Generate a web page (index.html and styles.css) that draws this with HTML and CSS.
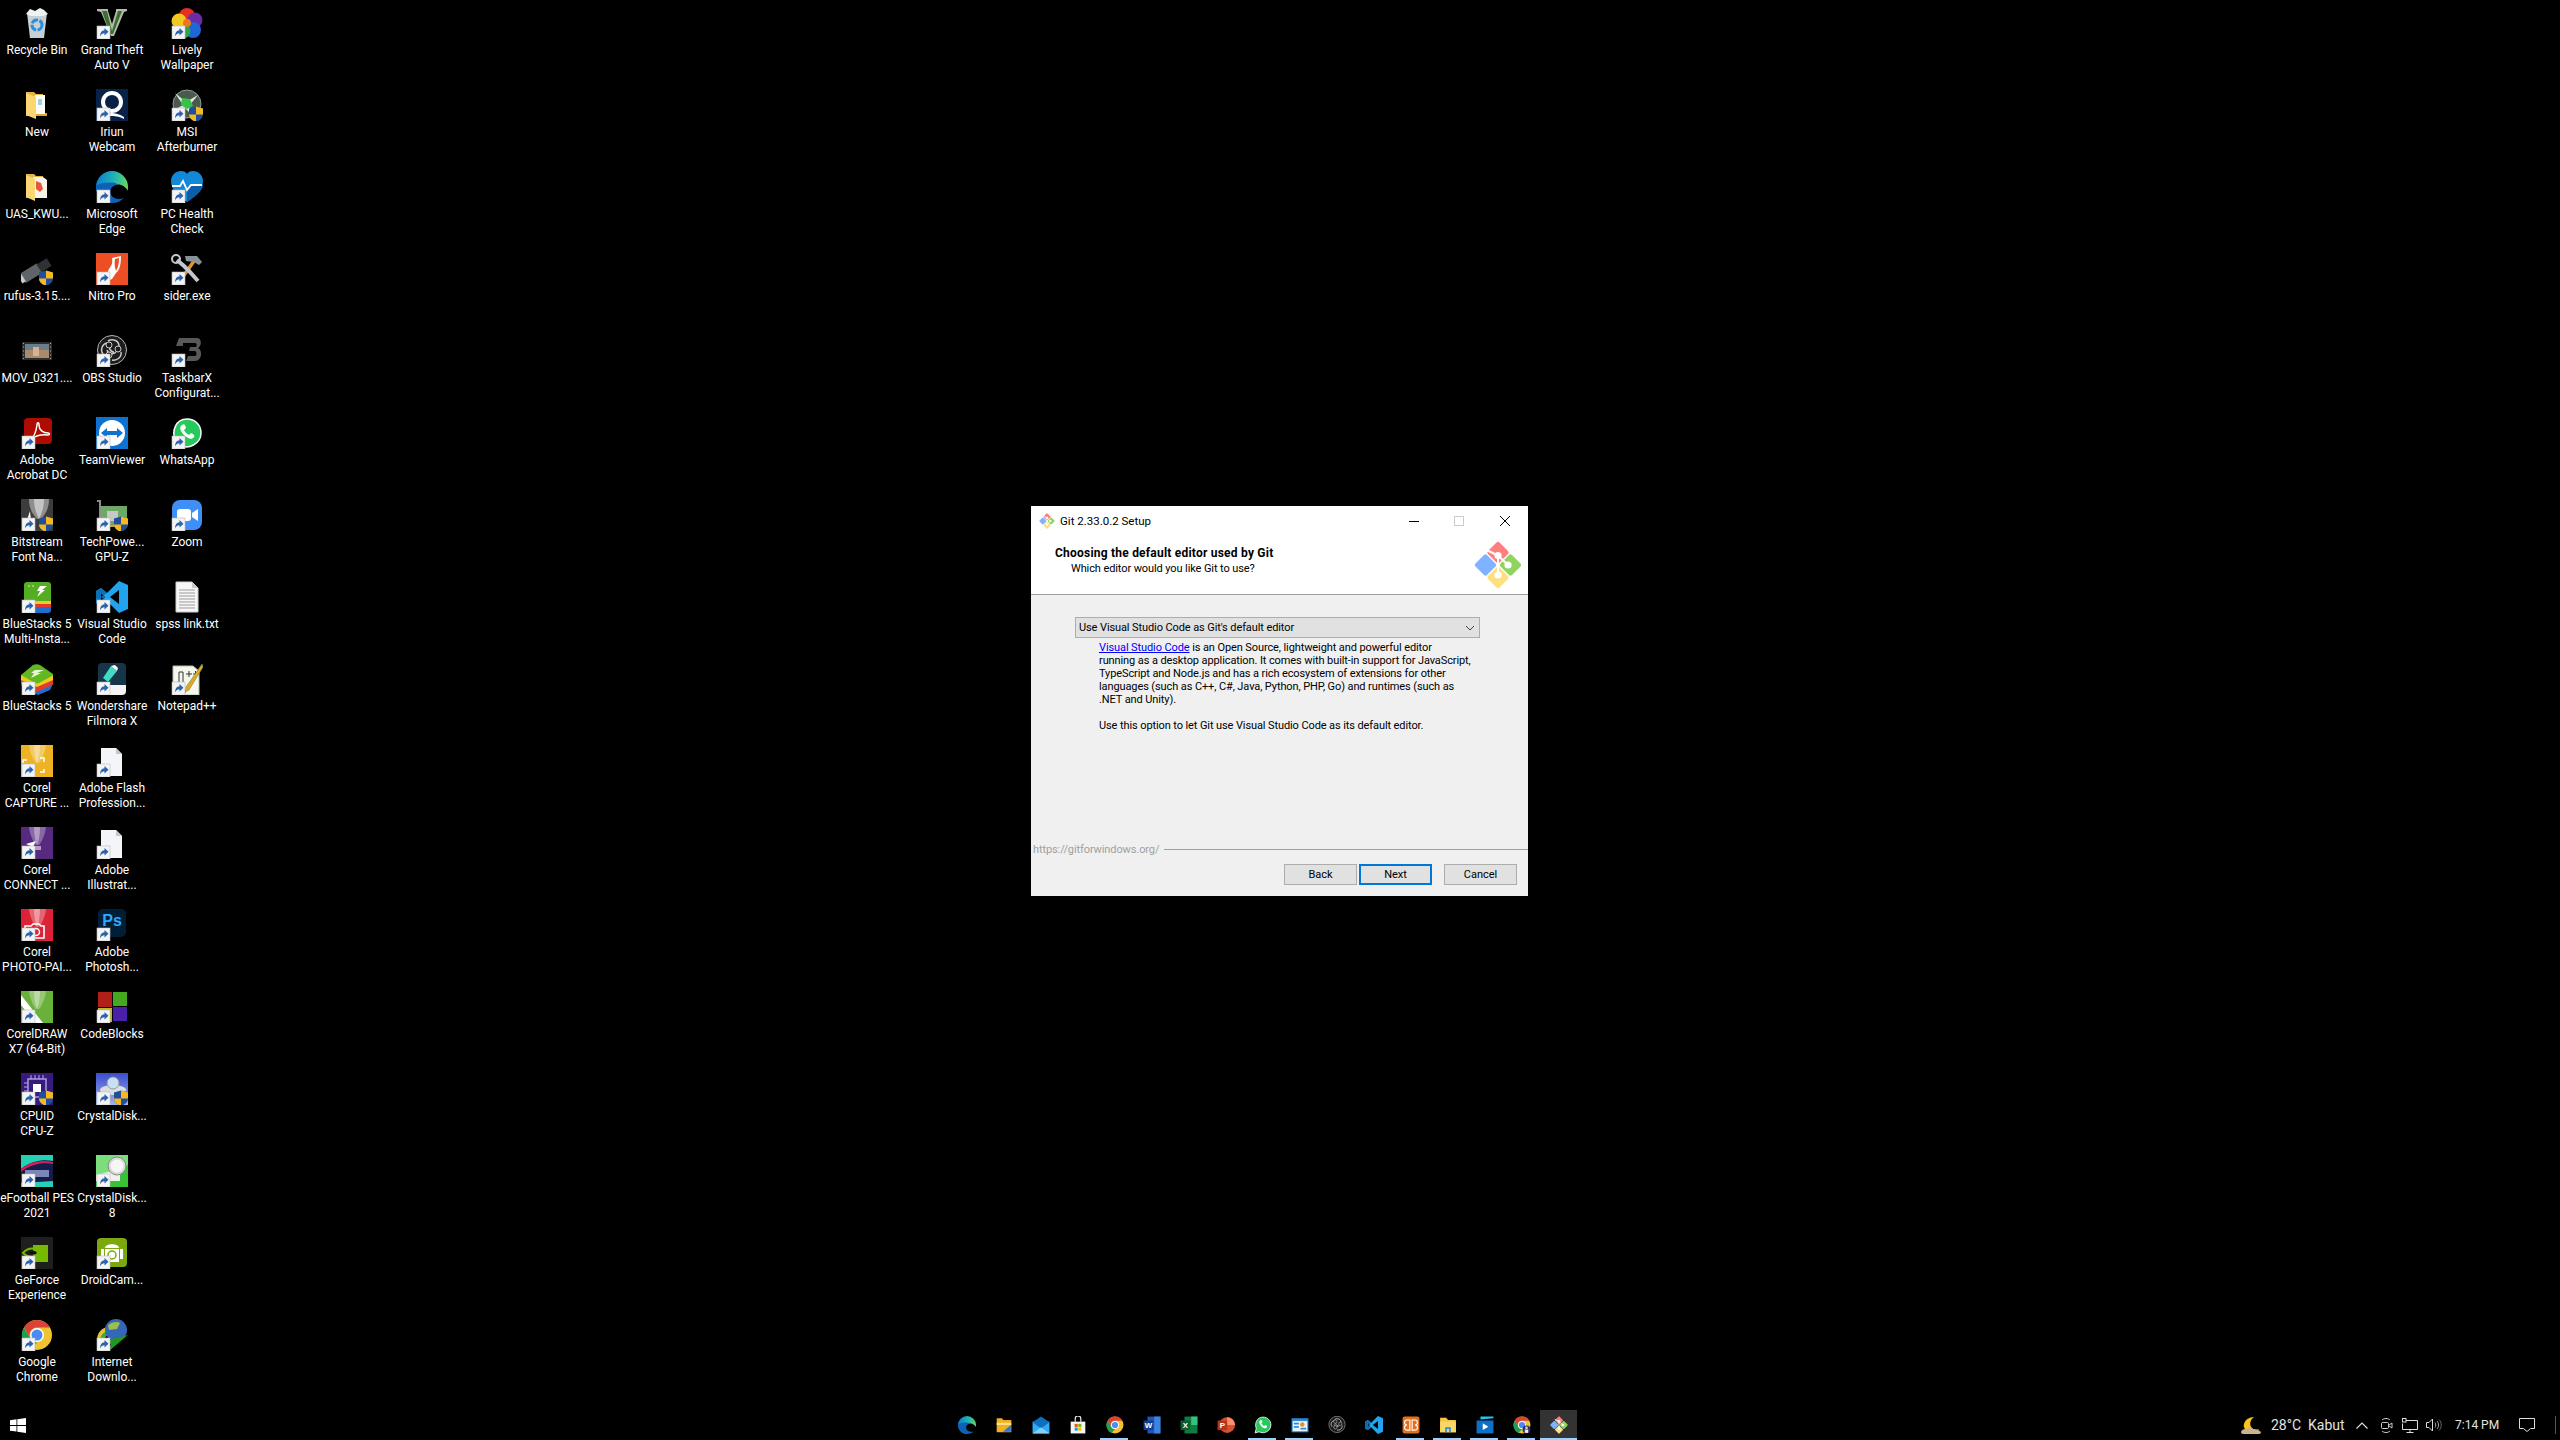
FILE: index.html
```html
<!DOCTYPE html>
<html lang="en">
<head>
<meta charset="utf-8">
<title>Git 2.33.0.2 Setup</title>
<link rel="stylesheet" href="styles.css">
</head>
<body>
<svg class="defs" width="0" height="0" aria-hidden="true">
<defs>
<linearGradient id="eg" x1="0" y1=".4" x2="1" y2=".6"><stop offset="0" stop-color="#0d7fd2"/><stop offset=".55" stop-color="#23b8b0"/><stop offset="1" stop-color="#72d65a"/></linearGradient>
<linearGradient id="cdi" x1="0" y1="0" x2="0" y2="1"><stop offset="0" stop-color="#3a4ccf"/><stop offset="1" stop-color="#9fb4e8"/></linearGradient>
<symbol id="sc" viewBox="0 0 32 32"><rect x="1" y="19" width="13" height="13" fill="#f4f4f4" stroke="#bbb" stroke-width=".6"/><path d="M4 29.5c0-4 1.5-6 4.5-6.3V21l4 3.8-4 3.8v-2.300c-2 0-3.300.8-4.500 3.200z" fill="#2a62ae"/></symbol>
<symbol id="sh" viewBox="0 0 32 32"><path d="M25 17.500l7 2v6c0 3.800-3 5.800-7 7.500-4-1.700-7-3.700-7-7.500v-6z" fill="#1f4f9c"/><path d="M25 17.500l7 2v6h-7zM25 25.500V33c-4-1.700-7-3.700-7-7.500z" fill="#f6b81f"/></symbol>
<symbol id="recycle" viewBox="0 0 32 32"><path d="M6 6l20 0-3 25H9z" fill="#c6d0d4"/><path d="M5 7l4-5 5 2 5-3 4 2 4 4-5 2H10z" fill="#eef2f3"/><circle cx="16" cy="18" r="5" fill="none" stroke="#2a8fd8" stroke-width="3" stroke-dasharray="7 1.500"/></symbol>
<symbol id="gta" viewBox="0 0 32 32"><path d="M1 2h11v2l4 13 4-13V2h11v2l-3 1-10 24h-3L5 5 1 4z" fill="#b4b8ad"/><path d="M6 4h5l5 20 6-20h4l-9 23h-3z" fill="#3b6f2d"/></symbol>
<symbol id="folder" viewBox="0 0 32 32"><path d="M5 3h8l2 2h7v22H5z" fill="#e6b445"/><rect x="14" y="6" width="10" height="21" fill="#fdfdf6"/><rect x="17" y="10" width="4" height="6" fill="#9fd0ea"/><path d="M5 4l10 4v22L5 26z" fill="#fbd671"/><path d="M15 27h11v-3h-2v1h-9z" fill="#e0a92e"/></symbol>
<symbol id="uas" viewBox="0 0 32 32"><path d="M5 3h8l2 2h7v22H5z" fill="#e6b445"/><path d="M12 6h10l4 3v18H12z" fill="#f7f3ea"/><path d="M15 10l5 2 2 6-3 3-4-3z" fill="#e1583b"/><path d="M5 4l9 4v22L5 26z" fill="#fbd671"/></symbol>
<symbol id="iriun" viewBox="0 0 32 32"><rect width="32" height="32" fill="#0a2147"/><circle cx="16" cy="13" r="9" fill="none" stroke="#fff" stroke-width="4"/><path d="M14 24c6 0 9 1 14 4v2c-6-3-9-3-14-3z" fill="#fff"/></symbol>
<symbol id="msi" viewBox="0 0 32 32"><circle cx="16" cy="15" r="14" fill="#4c5a4e" stroke="#8f9a92"/><path d="M4 4l11 9 12-7-9 11 5 11-9-9-11 2 9-5z" fill="#dfe8e2"/><path d="M11 9l8 1 3 7-6 3-6-4z" fill="#39c048"/></symbol>
<symbol id="edge" viewBox="0 0 32 32"><circle cx="16" cy="16" r="16" fill="url(#eg)"/><path d="M32.500 21C30 16 26 13 20.500 13.500 15 14 11.500 17 11.500 21c0 4 3 8 7 11.500H33z" fill="#000"/><path d="M0 15c0 10 7 17 16 17 5 0 9-2 12-5-5 2-10 1-12.500-2.500-2-3-1.500-7 1.500-9 2-1.500 4-2 5-2-2-1.500-4-2-6-2C9 11.500 3 12 0 15z" fill="#0b62b6"/></symbol>
<symbol id="health" viewBox="0 0 32 32"><path d="M16 31C7 25 0 19 0 10 0 4 5 0 10 0c3 0 5 1 6 3 1-2 3-3 6-3 5 0 10 4 10 10 0 9-7 15-16 21z" fill="#1488d8"/><path d="M16 31c9-6 16-12 16-17H20l-4 5z" fill="#0d5ea8"/><path d="M1 15h8l3-5 4 9 4-5h11" fill="none" stroke="#fff" stroke-width="1.800"/></symbol>
<symbol id="rufus" viewBox="0 0 32 32"><g transform="rotate(-32 16 16)"><rect x="-1" y="11" width="20" height="11" rx="1" fill="#5f6468"/><rect x="18" y="12" width="12" height="9" fill="#2f3235"/><rect x="-4" y="12.500" width="4" height="8" fill="#c8ccd0"/></g></symbol>
<symbol id="nitro" viewBox="0 0 32 32"><rect width="32" height="32" fill="#ee4e24"/><path d="M16 5l9-2c0 7-1 14-5 17l-4 6c-2 1-5 2-7 0 3-3 2-7 4-10 2-3 4-5 3-11z" fill="#fff"/><path d="M19 6l4-1c0 5-1 10-3 13-1-3-2-8-1-12z" fill="#ee4e24"/></symbol>
<symbol id="sider" viewBox="0 0 32 32"><path d="M9 28L23 8" stroke="#e0952a" stroke-width="3.500"/><path d="M14 3h12l5 6-3 3-5-3-8-1z" fill="#8a9298"/><path d="M6 7l7 6 5 5 9 10" stroke="#c2c8cc" stroke-width="4" fill="none"/><circle cx="5" cy="6" r="4" fill="none" stroke="#c2c8cc" stroke-width="2"/></symbol>
<symbol id="mov" viewBox="0 0 32 32"><rect x="1" y="7" width="30" height="18" fill="#2d2d2d"/><rect x="4" y="9" width="24" height="14" fill="#a88a6e"/><rect x="4" y="9" width="24" height="6" fill="#6b7d88"/><rect x="12" y="12" width="6" height="9" fill="#d9b090"/><path d="M2 8.500h1M2 12h1M2 16h1M2 20h1M2 23.500h1M29 8.500h1M29 12h1M29 16h1M29 20h1M29 23.500h1" stroke="#aaa"/></symbol>
<symbol id="obs" viewBox="0 0 32 32"><circle cx="16" cy="15" r="14.500" fill="#1c1c1c" stroke="#b5b5b5"/><path d="M12 6c5-3 11 0 11 5M25 17c1 5-4 9-9 8M7 19c-3-4-1-10 4-11M15 9c-3 3-1 8 3 8M20 17c-3 3-8 2-9-2" fill="none" stroke="#c9c9c9" stroke-width="1.500"/><circle cx="13" cy="10" r="3" fill="#1c1c1c" stroke="#c9c9c9"/><circle cx="22" cy="14" r="3" fill="#1c1c1c" stroke="#c9c9c9"/><circle cx="13" cy="20" r="3" fill="#1c1c1c" stroke="#c9c9c9"/></symbol>
<symbol id="tbx" viewBox="0 0 32 32"><path d="M8 3h18c5 0 5 8 1 10 5 2 4 13-3 13H15l2-5h7c2 0 2-4 0-5h-6l1-4h6c1-1 1-4-1-4H12v3H5z" fill="#595959"/></symbol>
<symbol id="acrobat" viewBox="0 0 32 32"><rect x="3" y="1" width="28" height="26" rx="4" fill="#ae0c00"/><path d="M10 22c3-2 5-7 6-14 0-3 2-3 2 0 0 5 4 8 9 8 2 0 2 2 0 2-6-1-11 0-17 4z" fill="none" stroke="#fff" stroke-width="1.500"/></symbol>
<symbol id="tv" viewBox="0 0 32 32"><rect width="32" height="32" fill="#0e72d2"/><circle cx="16" cy="16" r="13" fill="#fff"/><path d="M5 16l6-5v3h10v-3l6 5-6 5v-3H11v3z" fill="#0e72d2"/></symbol>
<symbol id="wa" viewBox="0 0 32 32"><path d="M2 30l2-8C1 15 4 2 16 2c8 0 14 6 14 14 0 11-13 17-21 12z" fill="#25c95c" stroke="#fff" stroke-width="1.500"/><path d="M11 8c-3 2-2 6 2 10 4 4 8 5 10 2 1-1 0-2-1-3l-2-1-2 2c-2-1-4-3-5-5l2-2-1-3c-1-1-2-1-3 0z" fill="#fff"/></symbol>
<symbol id="bits" viewBox="0 0 32 32"><rect width="32" height="32" fill="#3c3c3c"/><path d="M8 0c0 10 4 16 8 20h4c4-4 8-10 8-20z" fill="#8e8e8e"/><path d="M13 0c0 8 2 14 5 20 3-6 5-12 5-20z" fill="#c4c4c4"/><path d="M9 12l-6 18h8z" fill="#fff"/></symbol>
<symbol id="gpuz" viewBox="0 0 32 32"><rect x="4" y="7" width="27" height="19" fill="#6ea867"/><path d="M1 1h4v26H3V3H1z" fill="#8b8b8b"/><rect x="11" y="12" width="11" height="10" fill="#c8c8c8"/><rect x="8" y="26" width="20" height="2" fill="#c9a33a"/></symbol>
<symbol id="zoom" viewBox="0 0 32 32"><rect x="1" y="1" width="30" height="30" rx="8" fill="#3f8ff7"/><rect x="6" y="10" width="14" height="12" rx="3" fill="#fff"/><path d="M21 14l6-4v12l-6-4z" fill="#fff"/></symbol>
<symbol id="bs5m" viewBox="0 0 32 32"><rect x="3" y="1" width="27" height="22" rx="3" fill="#55ad23"/><circle cx="8" cy="5" r="1" fill="#a8e08a"/><circle cx="12" cy="5" r="1" fill="#a8e08a"/><path d="M19 5h7l-5 4h3l-8 7 3-6h-3z" fill="#fff"/><rect x="3" y="20" width="27" height="3" fill="#f0c91e"/><rect x="3" y="23" width="27" height="3" fill="#e23b2e"/><path d="M3 26h27v3a3 3 0 0 1-3 3H6a3 3 0 0 1-3-3z" fill="#1f6fd0"/></symbol>
<symbol id="vsc" viewBox="0 0 32 32"><path d="M23 0l9 4v24l-9 4-12-12-6 5-5-3V10l5-3 6 5zM23 9l-9 7 9 7zM5 12v8l4-4z" fill="#21a3ee" fill-rule="evenodd"/><path d="M11 12L5 7 0 10v12l5 3 6-5-6-4zM5 12l4 4-4 4z" fill="#0a6fb5" fill-rule="evenodd"/></symbol>
<symbol id="txt" viewBox="0 0 32 32"><path d="M5 1h16l6 6v24H5z" fill="#f6f6f6" stroke="#cfcfcf"/><path d="M21 1v6h6z" fill="#c8c8c8"/><path d="M8 9h16M8 12h16M8 15h16M8 18h16M8 21h16M8 24h16M8 27h16" stroke="#9b9b9b"/></symbol>
<symbol id="bs5" viewBox="0 0 32 32"><path d="M0 21l3 6 12 4 2 1 12-5 3-6z" fill="#1f6fd0"/><path d="M0 16v5l15 7 2 .5 15-7v-5z" fill="#e23b2e"/><path d="M0 12v5l16 7 16-7v-5z" fill="#f0c91e"/><path d="M0 12L12 2c2-1 5-1 7 0l13 9c0 1 0 1-1 2L18 20c-1 .5-3 .5-4 0z" fill="#62b822"/><path d="M14 7h9l-7 3h4l-10 5 3-5h-3z" fill="#e9f7d8"/></symbol>
<symbol id="fil" viewBox="0 0 32 32"><rect x="2" y="0" width="28" height="28" rx="4" fill="#173549"/><path d="M2 22h28v6a4 4 0 0 1-4 4H6a4 4 0 0 1-4-4z" fill="#f4f4f4"/><path d="M15 3l6 5-9 11-5-4z" fill="#3fdcc3"/><path d="M15 3l4-1 3 3-1 3z" fill="#fff"/></symbol>
<symbol id="npp" viewBox="0 0 32 32"><path d="M2 3h20l6 5v24H2z" fill="#f4f8ee" stroke="#b5c0a6"/><path d="M8 9h4v18H8z" fill="none" stroke="#333"/><path d="M5 27h10v3H5z" fill="#7fbf3f"/><path d="M15 11h6M18 8v6M22 11h5M24.500 8v6" stroke="#333"/><path d="M31 1l1 3-14 23-4 2 1-5z" fill="#e8a32a" stroke="#694" stroke-width=".6"/></symbol>
<symbol id="corel" viewBox="0 0 32 32"><rect width="32" height="32" fill="currentColor"/><path d="M8 0c1 8 4 14 7 18h3c3-4 6-10 7-18z" fill="#fff" fill-opacity=".3"/><path d="M13 0c0 7 1 13 3 18 2-5 3-11 3-18z" fill="#fff" fill-opacity=".35"/></symbol>
<symbol id="cap" viewBox="0 0 32 32"><use href="#corel" color="#edb324"/><path d="M2 18v-3h4M19 13h4v4M23 24v3h-4" fill="none" stroke="#fff" stroke-width="1.500"/></symbol>
<symbol id="con" viewBox="0 0 32 32"><use href="#corel" color="#57297f"/><path d="M5 17l10-3-3 6z" fill="#fff"/><rect x="13" y="19" width="7" height="4" fill="#b89acb"/></symbol>
<symbol id="pai" viewBox="0 0 32 32"><use href="#corel" color="#dc2236"/><path d="M4 17h6l2-2h6l2 2h3v12H4z" fill="none" stroke="#fff" stroke-width="1.600"/><circle cx="15" cy="23" r="3.500" fill="none" stroke="#fff" stroke-width="1.500"/></symbol>
<symbol id="cdr" viewBox="0 0 32 32"><use href="#corel" color="#6ab13c"/><path d="M0 4l22 28h-8L0 14z" fill="#fff"/></symbol>
<symbol id="file" viewBox="0 0 32 32"><path d="M5 3h15l6 6v22H5z" fill="#f3f5f8"/><path d="M20 3v6h6z" fill="#c3c8cf"/></symbol>
<symbol id="ps" viewBox="0 0 32 32"><rect x="2" y="0" width="28" height="28" rx="5" fill="#001e36"/><text x="16" y="17" font-family="Liberation Sans,sans-serif" font-size="16" font-weight="700" text-anchor="middle" fill="#31a8ff">Ps</text></symbol>
<symbol id="cb" viewBox="0 0 32 32"><rect x="2" y="1" width="14" height="15" fill="#b01f18"/><rect x="17" y="1" width="14" height="14" fill="#45a81f"/><rect x="2" y="17" width="14" height="14" fill="#b9b92a"/><rect x="17" y="16" width="14" height="14" fill="#4c1fa8"/></symbol>
<symbol id="cpu" viewBox="0 0 32 32"><rect width="32" height="32" fill="#38197f"/><rect x="7" y="6" width="18" height="18" fill="none" stroke="#a99bd8" stroke-width="1.500"/><rect x="12" y="11" width="8" height="8" fill="#fff"/><path d="M10 2v4M14 2v4M18 2v4M22 2v4M3 10h4M3 14h4M3 18h4" stroke="#b4a9e0"/></symbol>
<symbol id="cdk" viewBox="0 0 32 32"><rect width="32" height="32" fill="url(#cdi)"/><ellipse cx="17" cy="17" rx="13" ry="5" fill="#d9dde4"/><circle cx="17" cy="10" r="6" fill="#c9e0f4" stroke="#999"/></symbol>
<symbol id="pes" viewBox="0 0 32 32"><rect width="32" height="32" fill="#141c4c"/><path d="M0 0h32v6c-10-2-22 0-32 8z" fill="#25d0b4"/><path d="M0 14C10 6 22 5 32 7v2C22 7 10 9 0 17z" fill="#d01f5a"/><rect x="4" y="15" width="24" height="7" fill="#7e86b6"/><path d="M0 28l32-2v6H0z" fill="#25d0b4"/></symbol>
<symbol id="cdm" viewBox="0 0 32 32"><rect width="32" height="32" fill="#38c238"/><path d="M0 0h32v10L0 22z" fill="#7bde7b"/><path d="M0 20l24-6v12H0z" fill="#eef2ee"/><circle cx="21" cy="11" r="9" fill="#d8d8d8" stroke="#888"/><circle cx="21" cy="11" r="6.500" fill="#f6f6f6"/></symbol>
<symbol id="gfe" viewBox="0 0 32 32"><rect width="32" height="32" fill="#1f1f1f"/><rect x="12" y="8" width="15" height="17" fill="#76b900"/><path d="M2 16c5-6 13-6 19 0-6 5-14 5-19 0z" fill="none" stroke="#76b900" stroke-width="2"/><path d="M8 16c3-3 6-3 8 0-2 2-5 2-8 0z" fill="#111"/></symbol>
<symbol id="droid" viewBox="0 0 32 32"><rect x="1" y="1" width="30" height="29" rx="4" fill="#7aa80e"/><path d="M9 11c0-5 14-5 14 0z" fill="#fff"/><rect x="9" y="12" width="14" height="13" fill="#fff"/><rect x="5" y="12" width="3" height="10" fill="#fff"/><rect x="24" y="12" width="3" height="10" fill="#fff"/><circle cx="16" cy="18" r="4" fill="none" stroke="#7aa80e" stroke-width="1.500"/></symbol>
<symbol id="chrome" viewBox="0 0 32 32"><circle cx="16" cy="16" r="15" fill="#f1c232"/><path d="M16 1a15 15 0 0 1 13 7.500H16a7.500 7.500 0 0 0-6.500 11.200L3 8.500A15 15 0 0 1 16 1z" fill="#da4437"/><path d="M3 8.500l6.500 11.200A7.500 7.500 0 0 0 16 23.500L9.500 30A15 15 0 0 1 3 8.500z" fill="#1f9d55"/><circle cx="16" cy="16" r="7" fill="#fff"/><circle cx="16" cy="16" r="5.500" fill="#4a8bf5"/></symbol>
<symbol id="idm" viewBox="0 0 32 32"><path d="M1 22c0-8 4-13 11-14v5c-4 1-5 4-5 9z" fill="#e8c428"/><path d="M4 22c0-5 3-9 8-10v4c-2 1-4 3-4 6z" fill="#44a83b"/><circle cx="20" cy="11" r="11" fill="#3566b8"/><path d="M12 6c4-3 9-4 12-2l-3 6-8 1z" fill="#9ac24a"/><path d="M32 16L13 32l2-7-7-3z" fill="#1e9a1e"/></symbol>
<symbol id="lively" viewBox="0 0 32 32"><circle cx="16" cy="9" r="8" fill="#e62e22"/><circle cx="24" cy="13" r="7.500" fill="#6a2ca8"/><circle cx="22" cy="23" r="8" fill="#1f66d8"/><circle cx="12" cy="24" r="7.500" fill="#27a84a"/><circle cx="8" cy="14" r="7.500" fill="#f2c81f"/><circle cx="16" cy="16" r="4" fill="#e87a1c"/></symbol>
<symbol id="mail" viewBox="0 0 32 32"><rect x="1" y="10" width="30" height="21" fill="#34aaf2"/><path d="M1 11L16 1l15 10-15 11z" fill="#0c6fbf"/><path d="M1 31l15-11 15 11z" fill="#7fd0fb"/></symbol>
<symbol id="expl" viewBox="0 0 32 32"><path d="M3 4h9l3 3h14v22H3z" fill="#f2b01e"/><rect x="3" y="12" width="26" height="4" fill="#ffe08a"/><path d="M14 28l14-12v12z" fill="#2a78d8"/></symbol>
<symbol id="store" viewBox="0 0 32 32"><path d="M3 10h26v21H3z" fill="#f5f5f5"/><path d="M11 10V5a5 5 0 0 1 10 0v5" fill="none" stroke="#f5f5f5" stroke-width="2"/><rect x="10" y="14" width="5.500" height="5.500" fill="#f25022"/><rect x="16.500" y="14" width="5.500" height="5.500" fill="#7fba00"/><rect x="10" y="20.500" width="5.500" height="5.500" fill="#00a4ef"/><rect x="16.500" y="20.500" width="5.500" height="5.500" fill="#ffb900"/></symbol>
<symbol id="word" viewBox="0 0 32 32"><path d="M8 1h23v30H8z" fill="#1e57b8"/><path d="M20 1h11v30H20z" fill="#3f83e0"/><rect x="1" y="8" width="17" height="17" fill="#113f8f"/><text x="9.500" y="21" font-family="Liberation Sans,sans-serif" font-size="14" font-weight="700" text-anchor="middle" fill="#fff">W</text></symbol>
<symbol id="excel" viewBox="0 0 32 32"><path d="M8 1h23v30H8z" fill="#107c41"/><path d="M20 1h11v15H20z" fill="#33c481"/><rect x="1" y="8" width="17" height="17" fill="#0b5c30"/><text x="9.500" y="21" font-family="Liberation Sans,sans-serif" font-size="14" font-weight="700" text-anchor="middle" fill="#fff">X</text></symbol>
<symbol id="ppt" viewBox="0 0 32 32"><circle cx="18" cy="16" r="14" fill="#d35230"/><path d="M18 2a14 14 0 0 1 14 14H18z" fill="#ff8f6b"/><rect x="1" y="8" width="17" height="17" fill="#b7361a"/><text x="9.500" y="21" font-family="Liberation Sans,sans-serif" font-size="14" font-weight="700" text-anchor="middle" fill="#fff">P</text></symbol>
<symbol id="cpl" viewBox="0 0 32 32"><rect x="1" y="4" width="30" height="25" fill="#2a88d8"/><rect x="3" y="9" width="26" height="18" fill="#e8f2fb"/><circle cx="20" cy="15" r="4" fill="#f08c20"/><rect x="5" y="12" width="9" height="3" fill="#2a88d8"/><rect x="5" y="18" width="9" height="3" fill="#2a88d8"/><rect x="17" y="21" width="10" height="3" fill="#2a88d8"/></symbol>
<symbol id="xampp" viewBox="0 0 32 32"><rect x="1" y="1" width="30" height="30" rx="4" fill="#e4701e"/><path d="M9 7h5v18H9a4.500 4.500 0 0 1 0-9 4.500 4.500 0 0 1 0-9zM23 7h-5v18h5a4.500 4.500 0 0 0 0-9 4.500 4.500 0 0 0 0-9z" fill="none" stroke="#fff" stroke-width="2"/></symbol>
<symbol id="folder2" viewBox="0 0 32 32"><path d="M2 3h11l3 4h14v22H2z" fill="#f7c843"/><rect x="2" y="10" width="28" height="19" fill="#fbd764"/><path d="M11 29v-9h10v9h-3v-6h-4v6z" fill="#2a8de0"/></symbol>
<symbol id="video" viewBox="0 0 32 32"><path d="M8 1l23 0v3L8 6z" fill="#2ac3f0"/><rect x="1" y="8" width="30" height="23" fill="#0f6fc6"/><path d="M12 13l10 6-10 6z" fill="#fff"/></symbol>
<symbol id="chromeu" viewBox="0 0 32 32"><use href="#chrome"/><circle cx="24" cy="24" r="7" fill="#24346c"/><circle cx="24" cy="21" r="2.500" fill="#f0c8a8"/><rect x="21" y="24" width="6" height="6" fill="#e8e8e8"/></symbol>
<symbol id="git" viewBox="0 0 48 48"><g transform="rotate(45 24 24)"><rect x="7" y="7" width="16.300" height="16.300" rx="2.500" fill="#ff7f7f"/><rect x="24.700" y="7" width="16.300" height="16.300" rx="2.500" fill="#8ed45f"/><rect x="7" y="24.700" width="16.300" height="16.300" rx="2.500" fill="#80b3ff"/><rect x="24.700" y="24.700" width="16.300" height="16.300" rx="2.500" fill="#ffe07f"/></g><path d="M12.500 9L24 14.500V34M24 14.500L34 24" fill="none" stroke="#fff" stroke-width="2"/><circle cx="24" cy="14.500" r="3.600" fill="#fff"/><circle cx="34" cy="24" r="3.600" fill="#fff"/><circle cx="24" cy="34" r="3.600" fill="#fff"/></symbol>
</defs>
</svg>

<main class="desktop">
  <section class="icons">
    <div class="di"><svg class="ic"><use href="#recycle"/></svg><span>Recycle Bin</span></div>
    <div class="di"><svg class="ic"><use href="#folder"/></svg><span>New</span></div>
    <div class="di"><svg class="ic"><use href="#uas"/></svg><span>UAS_KWU...</span></div>
    <div class="di"><svg class="ic"><use href="#rufus"/><use href="#sh"/></svg><span>rufus-3.15....</span></div>
    <div class="di"><svg class="ic"><use href="#mov"/></svg><span>MOV_0321....</span></div>
    <div class="di"><svg class="ic"><use href="#acrobat"/><use href="#sc"/></svg><span>Adobe<br>Acrobat DC</span></div>
    <div class="di"><svg class="ic"><use href="#bits"/><use href="#sh"/><use href="#sc"/></svg><span>Bitstream<br>Font Na...</span></div>
    <div class="di"><svg class="ic"><use href="#bs5m"/><use href="#sc"/></svg><span>BlueStacks 5<br>Multi-Insta...</span></div>
    <div class="di"><svg class="ic"><use href="#bs5"/><use href="#sc"/></svg><span>BlueStacks 5</span></div>
    <div class="di"><svg class="ic"><use href="#cap"/><use href="#sc"/></svg><span>Corel<br>CAPTURE ...</span></div>
    <div class="di"><svg class="ic"><use href="#con"/><use href="#sc"/></svg><span>Corel<br>CONNECT ...</span></div>
    <div class="di"><svg class="ic"><use href="#pai"/><use href="#sc"/></svg><span>Corel<br>PHOTO-PAI...</span></div>
    <div class="di"><svg class="ic"><use href="#cdr"/><use href="#sc"/></svg><span>CorelDRAW<br>X7 (64-Bit)</span></div>
    <div class="di"><svg class="ic"><use href="#cpu"/><use href="#sh"/><use href="#sc"/></svg><span>CPUID<br>CPU-Z</span></div>
    <div class="di"><svg class="ic"><use href="#pes"/><use href="#sc"/></svg><span>eFootball PES<br>2021</span></div>
    <div class="di"><svg class="ic"><use href="#gfe"/><use href="#sc"/></svg><span>GeForce<br>Experience</span></div>
    <div class="di"><svg class="ic"><use href="#chrome"/><use href="#sc"/></svg><span>Google<br>Chrome</span></div>

    <div class="di"><svg class="ic"><use href="#gta"/><use href="#sc"/></svg><span>Grand Theft<br>Auto V</span></div>
    <div class="di"><svg class="ic"><use href="#iriun"/><use href="#sc"/></svg><span>Iriun<br>Webcam</span></div>
    <div class="di"><svg class="ic"><use href="#edge"/><use href="#sc"/></svg><span>Microsoft<br>Edge</span></div>
    <div class="di"><svg class="ic"><use href="#nitro"/><use href="#sc"/></svg><span>Nitro Pro</span></div>
    <div class="di"><svg class="ic"><use href="#obs"/><use href="#sc"/></svg><span>OBS Studio</span></div>
    <div class="di"><svg class="ic"><use href="#tv"/><use href="#sc"/></svg><span>TeamViewer</span></div>
    <div class="di"><svg class="ic"><use href="#gpuz"/><use href="#sh"/><use href="#sc"/></svg><span>TechPowe...<br>GPU-Z</span></div>
    <div class="di"><svg class="ic"><use href="#vsc"/><use href="#sc"/></svg><span>Visual Studio<br>Code</span></div>
    <div class="di"><svg class="ic"><use href="#fil"/><use href="#sc"/></svg><span>Wondershare<br>Filmora X</span></div>
    <div class="di"><svg class="ic"><use href="#file"/><use href="#sc"/></svg><span>Adobe Flash<br>Profession...</span></div>
    <div class="di"><svg class="ic"><use href="#file"/><use href="#sc"/></svg><span>Adobe<br>Illustrat...</span></div>
    <div class="di"><svg class="ic"><use href="#ps"/><use href="#sc"/></svg><span>Adobe<br>Photosh...</span></div>
    <div class="di"><svg class="ic"><use href="#cb"/><use href="#sc"/></svg><span>CodeBlocks</span></div>
    <div class="di"><svg class="ic"><use href="#cdk"/><use href="#sh"/><use href="#sc"/></svg><span>CrystalDisk...</span></div>
    <div class="di"><svg class="ic"><use href="#cdm"/><use href="#sc"/></svg><span>CrystalDisk...<br>8</span></div>
    <div class="di"><svg class="ic"><use href="#droid"/><use href="#sc"/></svg><span>DroidCam...</span></div>
    <div class="di"><svg class="ic"><use href="#idm"/><use href="#sc"/></svg><span>Internet<br>Downlo...</span></div>

    <div class="di"><svg class="ic"><use href="#lively"/><use href="#sc"/></svg><span>Lively<br>Wallpaper</span></div>
    <div class="di"><svg class="ic"><use href="#msi"/><use href="#sh"/><use href="#sc"/></svg><span>MSI<br>Afterburner</span></div>
    <div class="di"><svg class="ic"><use href="#health"/><use href="#sc"/></svg><span>PC Health<br>Check</span></div>
    <div class="di"><svg class="ic"><use href="#sider"/><use href="#sc"/></svg><span>sider.exe</span></div>
    <div class="di"><svg class="ic"><use href="#tbx"/><use href="#sc"/></svg><span>TaskbarX<br>Configurat...</span></div>
    <div class="di"><svg class="ic"><use href="#wa"/><use href="#sc"/></svg><span>WhatsApp</span></div>
    <div class="di"><svg class="ic"><use href="#zoom"/><use href="#sc"/></svg><span>Zoom</span></div>
    <div class="di"><svg class="ic"><use href="#txt"/></svg><span>spss link.txt</span></div>
    <div class="di"><svg class="ic"><use href="#npp"/><use href="#sc"/></svg><span>Notepad++</span></div>
  </section>

  <article class="window">
    <header class="head">
      <div class="titlebar">
        <svg class="tb-icon"><use href="#git"/></svg>
        <span class="tb-title">Git 2.33.0.2 Setup</span>
        <span class="wc wc-min"></span>
        <span class="wc wc-max"></span>
        <svg class="wc-close" viewBox="0 0 10 10"><path d="M0 0l10 10M10 0L0 10" stroke="#000" fill="none"/></svg>
      </div>
      <div class="banner">
        <div class="banner-text">
          <h1>Choosing the default editor used by Git</h1>
          <p>Which editor would you like Git to use?</p>
        </div>
        <svg class="logo"><use href="#git"/></svg>
      </div>
    </header>
    <div class="body">
      <div class="select"><span>Use Visual Studio Code as Git's default editor</span>
        <svg class="chev" viewBox="0 0 10 6"><path d="M1 1l4 4 4-4" fill="none" stroke="#444"/></svg>
      </div>
      <p class="desc"><a href="#">Visual Studio Code</a> is an Open Source, lightweight and powerful editor<br>running as a desktop application. It comes with built-in support for JavaScript,<br>TypeScript and Node.js and has a rich ecosystem of extensions for other<br>languages (such as C++, C#, Java, Python, PHP, Go) and runtimes (such as<br>.NET and Unity).<br><br>Use this option to let Git use Visual Studio Code as its default editor.</p>
    </div>
    <div class="url"><span>https://gitforwindows.org/</span><i></i></div>
    <div class="buttons">
      <button class="btn">Back</button>
      <button class="btn btn-next">Next</button>
      <button class="btn btn-cancel">Cancel</button>
    </div>
  </article>
</main>

<footer class="taskbar">
  <svg class="start" viewBox="0 0 16 15"><path d="M0 2.200L6.500 1.300V7H0zM7.300 1.200L16 0v7H7.300zM0 7.900h6.500v5.700L0 12.700zM7.300 7.900H16V15l-8.700-1.200z" fill="#fff"/></svg>
  <div class="tasks">
    <div class="task"><svg><use href="#edge"/></svg></div>
    <div class="task"><svg><use href="#expl"/></svg></div>
    <div class="task"><svg><use href="#mail"/></svg></div>
    <div class="task"><svg><use href="#store"/></svg></div>
    <div class="task on"><svg><use href="#chrome"/></svg></div>
    <div class="task"><svg><use href="#word"/></svg></div>
    <div class="task"><svg><use href="#excel"/></svg></div>
    <div class="task"><svg><use href="#ppt"/></svg></div>
    <div class="task on"><svg><use href="#wa"/></svg></div>
    <div class="task on"><svg><use href="#cpl"/></svg></div>
    <div class="task"><svg><use href="#obs"/></svg></div>
    <div class="task"><svg><use href="#vsc"/></svg></div>
    <div class="task on"><svg><use href="#xampp"/></svg></div>
    <div class="task on"><svg><use href="#folder2"/></svg></div>
    <div class="task on"><svg><use href="#video"/></svg></div>
    <div class="task on"><svg><use href="#chromeu"/></svg></div>
    <div class="task active"><svg><use href="#git"/></svg></div>
  </div>
  <div class="tray">
    <svg class="t-moon" viewBox="0 0 22 17"><path d="M14 0c-4 3-5 8-2 11 2 2 5 2 7 1-1 3-5 4-9 3-5-1-7-5-6-8 1-4 5-7 10-7z" fill="#f7c51e"/><path d="M1 15c1-3 4-3 5-3 2-2 6-2 7 0 3 0 6 1 8 3 0 1-1 2-2 2H3c-1 0-2-1-2-2z" fill="#c9b48e"/></svg>
    <span class="t-temp">28°C</span>
    <span class="t-cond">Kabut</span>
    <svg class="t-chev" viewBox="0 0 12 7"><path d="M.5 6.500L6 1l5.500 5.500" fill="none" stroke="#ddd" stroke-width="1.200"/></svg>
    <svg class="t-cam" viewBox="0 0 12 17"><path d="M1 3c2-2 6-2 8 0M1 14c2 2 6 2 8 0" fill="none" stroke="#ccc"/><rect x=".5" y="5.500" width="7" height="6" rx="1" fill="none" stroke="#ccc"/><path d="M8 8l3-2v5l-3-2" fill="none" stroke="#ccc"/></svg>
    <svg class="t-net" viewBox="0 0 16 15"><path d="M3.500 2.500h12v9H.5V5.500M8 11.500v3M4.500 14.500h7" fill="none" stroke="#ddd"/><rect x=".5" y=".5" width="3.500" height="3.500" fill="#000" stroke="#ddd"/></svg>
    <svg class="t-vol" viewBox="0 0 16 14"><path d="M.5 4.500h2.500L6.500 1v12L3 9.500H.5z" fill="none" stroke="#ddd"/><path d="M9 4.500c1 1.500 1 3.500 0 5M11 3c2 2 2 6 0 8" fill="none" stroke="#aaa"/><path d="M13 1.500c3 3 3 8 0 11" fill="none" stroke="#666"/></svg>
    <span class="t-time">7:14 PM</span>
    <svg class="t-note" viewBox="0 0 16 14"><path d="M.5.500h15v10h-4L8 13.500 4.500 10.500h-4z" fill="none" stroke="#ddd"/></svg>
    <i class="t-show"></i>
  </div>
</footer>
</body>
</html>
```

FILE: styles.css
```css
* { box-sizing: border-box; }
html, body { margin: 0; height: 100%; }
body {
  display: flex;
  flex-direction: column;
  width: 2560px;
  height: 1440px;
  background: #000;
  overflow: hidden;
  font-family: "Roboto", sans-serif;
  font-size: 11px;
  color: #000;
}
.defs { position: absolute; }
.desktop { position: relative; flex: 1; }
.icons {
  display: grid;
  grid-auto-flow: column;
  grid-template-rows: repeat(17, 82px);
  grid-template-columns: repeat(3, 74px);
  column-gap: 1px;
}
.di {
  display: flex;
  flex-direction: column;
  align-items: center;
  padding-top: 7px;
  color: #fff;
  font-size: 12px;
  line-height: 15px;
  letter-spacing: -.03px;
  text-align: center;
  white-space: nowrap;
}
.di span { margin-top: 4px; }
.ic { width: 32px; height: 32px; flex: none; }

.window {
  position: absolute;
  left: 1031px;
  top: 506px;
  width: 497px;
  height: 390px;
  display: flex;
  flex-direction: column;
  background: #f0f0f0;
  letter-spacing: -.1px;
  white-space: nowrap;
}
.head { background: #fff; height: 89px; border-bottom: 1px solid #a0a0a0; flex: none; }
.titlebar { display: flex; align-items: center; height: 30px; padding-left: 8px; }
.tb-icon { width: 16px; height: 16px; }
.tb-title { margin-left: 5px; font-size: 11.5px; letter-spacing: 0; }
.wc { display: block; }
.wc-min { margin-left: auto; width: 10px; height: 1px; background: #000; }
.wc-max { margin-left: 35px; width: 10px; height: 10px; border: 1px solid #ccc; }
.wc-close { margin-left: 36px; margin-right: 18px; width: 10px; height: 10px; }
.banner { display: flex; justify-content: space-between; padding: 5px 6px 0 24px; }
.banner-text { padding-top: 4px; }
.banner h1 { margin: 0; font-size: 12px; font-weight: 700; line-height: 16px; letter-spacing: .22px; }
.banner p { margin: 0 0 0 16px; line-height: 16px; }
.logo { width: 48px; height: 48px; }
.body { flex: 1; padding: 22px 48px 0 44px; }
.select {
  display: flex;
  align-items: center;
  justify-content: space-between;
  height: 21px;
  padding: 0 4px 0 3px;
  background: #e1e1e1;
  border: 1px solid #adadad;
}
.chev { width: 10px; height: 6px; }
.desc { margin: 3px 0 0 24px; line-height: 13px; }
.desc a { color: #0000ff; text-decoration: underline; }
.url { display: flex; align-items: center; height: 12px; padding-left: 2px; color: #a0a0a0; flex: none; }
.url i { flex: 1; height: 1px; margin-left: 5px; background: #a0a0a0; }
.buttons { display: flex; padding: 9px 11px 11px 253px; flex: none; height: 41px; }
.btn {
  width: 73px;
  height: 21px;
  margin-right: 2px;
  padding: 0;
  background: #e1e1e1;
  border: 1px solid #adadad;
  font: inherit;
  letter-spacing: 0;
  color: #000;
}
.btn-next { border: 2px solid #0078d7; margin-right: 12px; }
.btn-cancel { margin-right: 0; }

.taskbar { display: flex; align-items: center; height: 30px; flex: none; color: #e2e2e2; white-space: nowrap; }
.start { width: 16px; height: 15px; margin-left: 10px; flex: none; }
.tasks { display: flex; margin-left: 922px; height: 30px; }
.task { position: relative; display: flex; align-items: center; justify-content: center; width: 37px; }
.task svg { width: 18px; height: 18px; }
.task.on::after {
  content: "";
  position: absolute;
  left: 4px;
  right: 5px;
  bottom: 0;
  height: 2px;
  background: #99d1ff;
}
.task.active { background: #333; }
.task.active::after { content: ""; position: absolute; left: 0; right: 0; bottom: 0; height: 2px; background: #99d1ff; }
.tray { display: flex; align-items: center; margin-left: auto; }
.t-moon { width: 22px; height: 17px; }
.t-temp { width: 28px; margin-left: 9px; font-size: 14px; }
.t-cond { width: 36px; margin-left: 9px; font-size: 14px; }
.t-chev { width: 12px; height: 7px; margin-left: 12px; }
.t-cam { width: 12px; height: 17px; margin-left: 13px; }
.t-net { width: 16px; height: 15px; margin-left: 9px; }
.t-vol { width: 16px; height: 14px; margin-left: 8px; }
.t-time { width: 42px; margin-left: 13px; font-size: 12px; }
.t-note { width: 16px; height: 14px; margin-left: 22px; }
.t-show { width: 1px; height: 18px; margin: 0 4px 0 20px; background: #555; }
```
